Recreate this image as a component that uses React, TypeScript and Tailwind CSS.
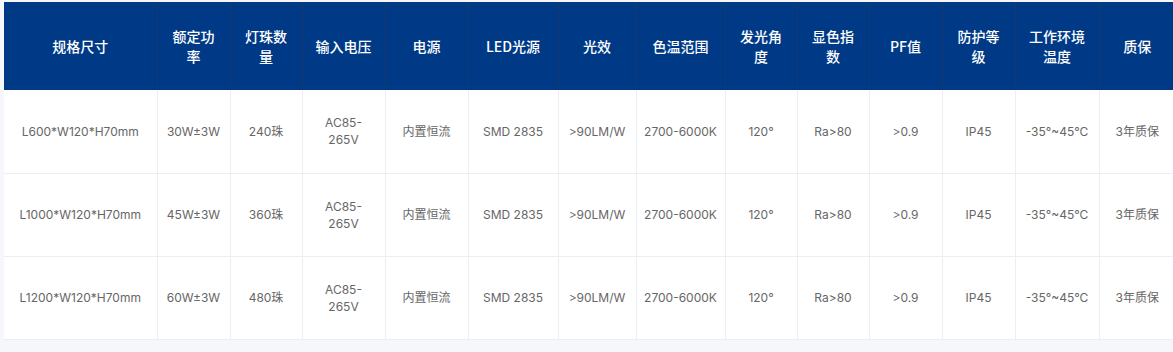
const columns = [
  { title: '规格尺寸', width: 153 },
  { title: '额定功率', width: 73 },
  { title: '灯珠数量', width: 72 },
  { title: '输入电压', width: 83 },
  { title: '电源', width: 83 },
  { title: 'LED光源', width: 90 },
  { title: '光效', width: 78 },
  { title: '色温范围', width: 89 },
  { title: '发光角度', width: 72 },
  { title: '显色指数', width: 72 },
  { title: 'PF值', width: 73 },
  { title: '防护等级', width: 73 },
  { title: '工作环境温度', width: 84 },
  { title: '质保', width: 76 },
]

const rows = [
  ['L600*W120*H70mm', '30W±3W', '240珠'],
  ['L1000*W120*H70mm', '45W±3W', '360珠'],
  ['L1200*W120*H70mm', '60W±3W', '480珠'],
]

const common = ['内置恒流', 'SMD 2835', '>90LM/W', '2700-6000K', '120°', 'Ra>80', '>0.9', 'IP45', '-35°~45°C', '3年质保']

export default function App() {
  return (
    <div className="w-[1173px] h-[352px] overflow-hidden bg-[#f5f7fa] pt-[2px] pl-[4px]">
      <table
        className="table-fixed border-collapse bg-white"
        style={{ width: columns.reduce((s, c) => s + c.width, 0) }}
      >
        <colgroup>
          {columns.map((c) => (
            <col key={c.title} style={{ width: c.width }} />
          ))}
        </colgroup>
        <thead>
          <tr className="h-[88px] bg-[#003a87]">
            {columns.map((c, i) => (
              <th
                key={c.title}
                className={`px-[10px] text-center align-middle text-[14px] leading-[20px] font-medium text-white [font-family:'Noto_Sans_CJK_SC',sans-serif] ${
                  i > 0 ? 'border-l border-[#123a70]' : ''
                }`}
              >
                {c.title}
              </th>
            ))}
          </tr>
        </thead>
        <tbody>
          {rows.map((r) => (
            <tr key={r[0]} className="h-[83px] border-b border-[#ebeef5]">
              {[r[0], r[1], r[2], 'AC85-265V', ...common].map((v, i) => (
                <td
                  key={i}
                  className={`px-[6px] whitespace-nowrap text-center align-middle text-[12px] leading-[17px] text-[#666666] [font-family:Inter,'Noto_Sans_CJK_SC',sans-serif] ${
                    i > 0 ? 'border-l border-[#ebeef5]' : ''
                  }`}
                >
                  {v === 'AC85-265V' ? (
                    <>
                      AC85-
                      <br />
                      265V
                    </>
                  ) : (
                    v
                  )}
                </td>
              ))}
            </tr>
          ))}
        </tbody>
      </table>
    </div>
  )
}
